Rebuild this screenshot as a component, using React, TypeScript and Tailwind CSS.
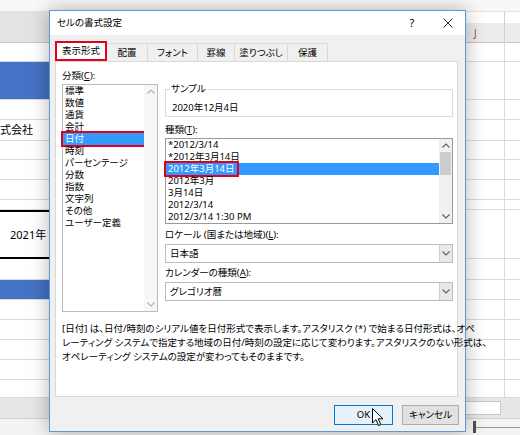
import type React from "react"

const ff = "font-['Noto_Sans','Noto_Sans_CJK_JP',sans-serif] [font-feature-settings:'palt']"

function Row({
  h,
  left = "bg-white border-b border-[#dadada]",
  children,
}: {
  h: string
  left?: string
  children?: React.ReactNode
}) {
  return (
    <div className={`flex ${h}`}>
      <div className={`w-[465px] flex items-center ${left}`}>{children}</div>
      <div className="w-[40px] border-b border-r border-[#dadada] bg-white" />
      <div className="flex-1 border-b border-[#dadada] bg-white" />
    </div>
  )
}

function ChevUp({ c = "#606060" }: { c?: string }) {
  return (
    <svg width="8" height="5" viewBox="0 0 8 5">
      <polyline points="0.5,4.5 4,1 7.5,4.5" fill="none" stroke={c} strokeWidth="1.1" />
    </svg>
  )
}

function ChevDown({ c = "#606060" }: { c?: string }) {
  return (
    <svg width="8" height="5" viewBox="0 0 8 5">
      <polyline points="0.5,0.5 4,4 7.5,0.5" fill="none" stroke={c} strokeWidth="1.1" />
    </svg>
  )
}

function Select({ value }: { value: string }) {
  return (
    <div className="flex h-[19px] w-[288px] border border-[#bcbcbc] bg-white">
      <div className="flex flex-1 items-center pl-[4px]">{value}</div>
      <div className="flex w-[13px] items-center justify-center border-l border-[#cfcfcf] bg-[#e8e8e8]">
        <ChevDown />
      </div>
    </div>
  )
}

const categories = ["標準", "数値", "通貨", "会計", "日付", "時刻", "パーセンテージ", "分数", "指数", "文字列", "その他", "ユーザー定義"]
const types = ["*2012/3/14", "*2012年3月14日", "2012年3月14日", "2012年3月", "3月14日", "2012/3/14", "2012/3/14 1:30 PM"]
const tabs = [
  { label: "配置", w: "w-[41px]" },
  { label: "フォント", w: "w-[50px]" },
  { label: "罫線", w: "w-[37px]" },
  { label: "塗りつぶし", w: "w-[53px]" },
  { label: "保護", w: "w-[40px]" },
]

export default function App() {
  return (
    <div className={`relative h-[435px] w-[520px] overflow-hidden bg-white text-[9.5px] leading-[12px] text-black ${ff}`}>
      {/* spreadsheet behind the dialog */}
      <div className="flex flex-col">
        <div className="h-[12px] border-b border-[#e2e2e2] bg-[#f8f8f8]" />
        <div className="flex h-[31px]">
          <div className="w-[465px] border-b border-[#c8c8c8] bg-[#e3e3e3]" />
          <div className="flex w-[40px] flex-col border-r border-[#d0d0d0]">
            <div className="h-[11px] bg-white" />
            <div className="flex flex-1 items-center border-b border-[#c8c8c8] bg-[#ececec] pl-[9px] text-[10px] text-[#a8561a]">J</div>
          </div>
          <div className="flex flex-1 flex-col">
            <div className="h-[11px] bg-white" />
            <div className="flex-1 border-b border-[#c8c8c8] bg-[#ececec]" />
          </div>
        </div>
        <Row h="h-[19px]" />
        <Row h="h-[38px]" left="bg-[#4472c4] border-b border-[#dadada]" />
        <Row h="h-[20px]" />
        <Row h="h-[21px]">
          <span className="text-[11px]">式会社</span>
        </Row>
        <Row h="h-[19px]" />
        <Row h="h-[20px]" />
        <Row h="h-[20px]" />
        <Row h="h-[10px]" />
        <Row h="h-[49px]" left="border-y-2 border-black bg-white">
          <span className="ml-[10px] text-[11px]">2021年</span>
        </Row>
        <Row h="h-[21px]" />
        <Row h="h-[20px]" left="bg-[#4472c4] border-b border-[#dadada]" />
        <Row h="h-[20px]" />
        <Row h="h-[20px]" />
        <Row h="h-[20px]" />
        <Row h="h-[20px]" />
        <Row h="h-[18px]" />
        <div className="flex h-[20px] items-center bg-[#e6e6e6] pl-[465px]">
          <div className="h-[14px] w-[36px] border border-[#c6c6c6] bg-white" />
        </div>
        <div className="flex h-[17px] items-center border-t border-[#d0d0d0] bg-[#f3f3f3] pl-[473px]">
          <div className="h-[12px] w-[3px] bg-[#505050]" />
          <div className="h-px flex-1 bg-[#9a9a9a]" />
        </div>
      </div>

      {/* dialog window */}
      <div className="absolute left-[49px] top-[10px] flex h-[422px] w-[417px] flex-col border border-[#5b9bd5] bg-[#f0f0f0] shadow-[0_0_18px_rgba(0,0,0,0.3)]">
        <div className="flex h-[24px] items-center bg-white pl-[7px] pr-[5px]">
          <span>セルの書式設定</span>
          <span className="ml-auto w-[12px] text-center text-[11px]">?</span>
          <span className="ml-[18px] flex w-[24px] justify-center">
            <svg width="10" height="10" viewBox="0 0 10 10">
              <path d="M0.5 0.5 L9.5 9.5 M9.5 0.5 L0.5 9.5" stroke="#222" strokeWidth="1" />
            </svg>
          </span>
        </div>

        <div className="mt-[6px] flex h-[20px] items-end pl-[5px]">
          <div className="flex h-[20px] w-[52px] items-center justify-center bg-white outline-2 outline-solid outline-[#e2001a] -outline-offset-2">
            表示形式
          </div>
          {tabs.map((t) => (
            <div
              key={t.label}
              className={`flex h-[18px] items-center justify-center border-r border-t border-[#d9d9d9] bg-[#f0f0f0] ${t.w}`}
            >
              {t.label}
            </div>
          ))}
        </div>

        <div className="ml-[5px] h-[336px] w-[403px] border border-[#d9d9d9] bg-white pl-[6px]">
          <div className="flex">
            <div className="flex flex-col">
              <div className="mt-[8px]">
                分類(<span className="underline">C</span>):
              </div>
              <div className="mt-[2px] flex h-[228px] w-[96px] border border-[#bcbcbc]">
                <div className="flex flex-1 flex-col">
                  {categories.map((c) =>
                    c === "日付" ? (
                      <div
                        key={c}
                        className="h-[12px] bg-[#3399ff] pl-[2px] text-white outline-2 outline-solid outline-[#e2001a]"
                      >
                        {c}
                      </div>
                    ) : (
                      <div key={c} className="h-[12px] pl-[2px]">
                        {c}
                      </div>
                    )
                  )}
                </div>
                <div className="flex w-[13px] flex-col items-center justify-between bg-[#f7f7f7] py-[4px]">
                  <ChevUp c="#b0b0b0" />
                  <ChevDown c="#b0b0b0" />
                </div>
              </div>
            </div>

            <div className="ml-[7px] flex w-[288px] flex-col">
              <div className="relative mt-[27px] h-[28px] border border-[#dcdcdc] pl-[6px] pt-[12px]">
                <span className="absolute left-[4px] top-[-7px] bg-white px-[1px]">サンプル</span>
                2020年12月4日
              </div>
              <div className="mt-[7px]">
                種類(<span className="underline">T</span>):
              </div>
              <div className="mt-[2px] flex h-[86px] border border-[#9a9a9a]">
                <div className="flex flex-1 flex-col">
                  {types.map((t, i) =>
                    i === 2 ? (
                      <div key={i} className="flex h-[12px] bg-[#3399ff] text-white">
                        <span className="h-[12px] px-[2px] outline-2 outline-solid outline-[#e2001a]">{t}</span>
                      </div>
                    ) : (
                      <div key={i} className="h-[12px] pl-[2px]">
                        {t}
                      </div>
                    )
                  )}
                </div>
                <div className="flex w-[13px] flex-col items-center bg-[#f0f0f0]">
                  <div className="flex h-[13px] items-center">
                    <ChevUp />
                  </div>
                  <div className="h-[23px] w-[11px] bg-[#cdcdcd]" />
                  <div className="mt-auto flex h-[13px] items-center">
                    <ChevDown />
                  </div>
                </div>
              </div>
              <div className="mt-[5px]">
                ロケール (国または地域)(<span className="underline">L</span>):
              </div>
              <div className="mt-[3px]">
                <Select value="日本語" />
              </div>
              <div className="mt-[4px]">
                カレンダーの種類(<span className="underline">A</span>):
              </div>
              <div className="mt-[3px]">
                <Select value="グレゴリオ暦" />
              </div>
            </div>
          </div>

          <div className="mt-[10px] flex flex-col whitespace-nowrap leading-[14px]">
            <div>[日付] は、日付/時刻のシリアル値を日付形式で表示します。アスタリスク (*) で始まる日付形式は、オペ</div>
            <div>レーティング システムで指定する地域の日付/時刻の設定に応じて変わります。アスタリスクのない形式は、</div>
            <div>オペレーティング システムの設定が変わってもそのままです。</div>
          </div>
        </div>

        <div className="mt-[8px] flex justify-end gap-[9px] pr-[6px]">
          <div className="relative flex h-[20px] w-[59px] items-center justify-center border border-[#0078d7] bg-[#e5f1fb]">
            OK
            <svg className="absolute left-[37px] top-[2px]" width="12" height="19" viewBox="0 0 12 19">
              <path d="M0.5 0.5 L0.5 15 L4 11.6 L6.6 17.6 L8.8 16.7 L6.3 10.8 L11 10.8 Z" fill="#fff" stroke="#000" strokeWidth="1" strokeLinejoin="round" />
            </svg>
          </div>
          <div className="flex h-[20px] w-[57px] items-center justify-center border border-[#adadad] bg-[#e1e1e1]">
            キャンセル
          </div>
        </div>
      </div>
    </div>
  )
}
